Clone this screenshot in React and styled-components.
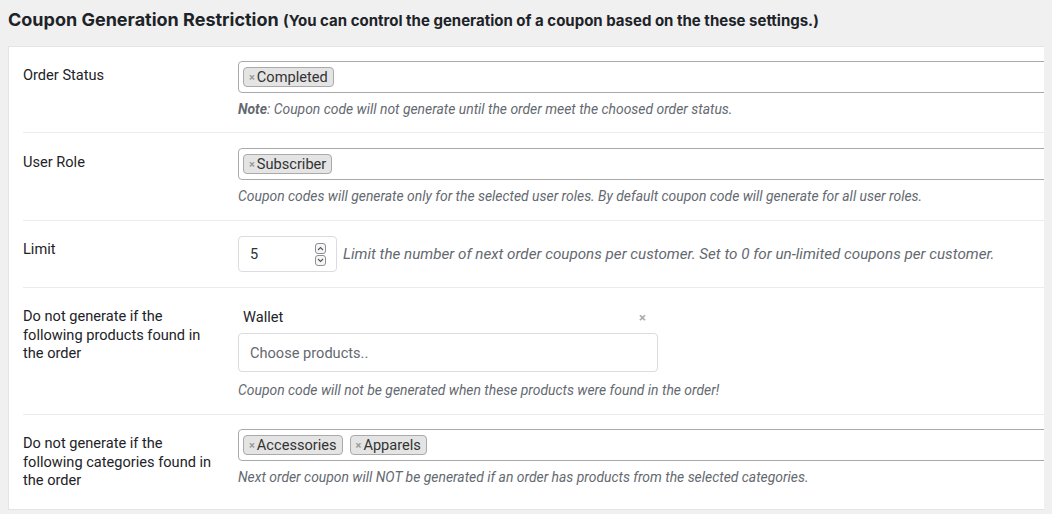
import styled, { createGlobalStyle } from "styled-components";

const GlobalStyle = createGlobalStyle`
    body {
        margin: 8px;
        background: #f0f0f1;
        font-family: Roboto, "Liberation Sans", sans-serif;
        color: #1d2327;
        overflow: hidden;
    }
`;

const Heading = styled.h2`
    margin: 0 0 15px 0;
    height: 23px;
    font-family: Inter, Roboto, sans-serif;
    font-size: 18px;
    font-weight: 700;
    line-height: 23px;
    white-space: nowrap;
    small {
        font-size: 15px;
    }
`;

const Card = styled.div`
    width: 1150px;
    background: #fff;
    border: 1px solid #e4e4e4;
    padding: 0 14px;
`;

const Row = styled.div`
    display: grid;
    grid-template-columns: 215px 1fr;
    padding: ${(p) => p.$pad || "14px 0"};
    border-bottom: 1px solid #ececec;
    &:last-child {
        border-bottom: none;
    }
`;

const Label = styled.div`
    font-size: 14.6px;
    line-height: 18.5px;
    padding-top: ${(p) => p.$top || "5px"};
    padding-right: 15px;
`;

const Field = styled.div`
    display: flex;
    flex-direction: column;
`;

const TagBox = styled.div`
    display: flex;
    align-items: center;
    gap: 7px;
    height: 32px;
    box-sizing: border-box;
    border: 1px solid #aaa;
    border-radius: 4px;
    padding: 0 4px;
    width: 900px;
`;

const Tag = styled.span`
    display: inline-flex;
    align-items: center;
    height: 20px;
    box-sizing: border-box;
    background: #e4e4e4;
    border: 1px solid #aaa;
    border-radius: 4px;
    padding: 0 5px 0 5px;
    font-size: 14.6px;
    color: #333;
    b {
        color: #999;
        font-weight: 700;
        font-size: 11px;
        margin-right: 2px;
    }
`;

const Help = styled.p`
    margin: ${(p) => p.$mt || "7px"} 0 0 0;
    font-size: ${(p) => p.$size || "13.9px"};
    font-style: italic;
    color: #646970;
    line-height: 18px;
    white-space: nowrap;
    strong {
        font-weight: 700;
    }
`;

const Inline = styled.div`
    display: flex;
    align-items: center;
    gap: 6px;
`;

const NumberBox = styled.div`
    display: flex;
    align-items: center;
    justify-content: space-between;
    width: 99px;
    height: 36px;
    box-sizing: border-box;
    border: 1px solid #dcdcde;
    border-radius: 4px;
    padding: 0 10px 0 11px;
    font-size: 14.5px;
    color: #2c3338;
`;

const Spinner = styled.div`
    display: flex;
    flex-direction: column;
    gap: 1px;
`;

const SpinBtn = styled.span`
    width: 11px;
    height: 11px;
    box-sizing: border-box;
    border: 1px solid #8c8f94;
    border-radius: 3px;
    background: #f6f6f6;
    display: flex;
    align-items: center;
    justify-content: center;
`;

const Selected = styled.div`
    display: flex;
    justify-content: space-between;
    align-items: center;
    width: 420px;
    padding: 0 12px 0 5px;
    box-sizing: border-box;
    height: 20px;
    font-size: 14.6px;
    margin-bottom: 6px;
    span {
        color: #aaa;
        font-size: 13px;
        font-weight: 700;
    }
`;

const SearchInput = styled.div`
    width: 420px;
    height: 39px;
    box-sizing: border-box;
    border: 1px solid #dcdcde;
    border-radius: 4px;
    padding: 0 11px;
    display: flex;
    align-items: center;
    font-size: 14.6px;
    color: #646970;
`;

function Chevron({ up }) {
    return (
        <svg width="7" height="5" viewBox="0 0 7 5">
            <path
                d={up ? "M1 4 L3.5 1.5 L6 4" : "M1 1 L3.5 3.5 L6 1"}
                fill="none"
                stroke="#50575e"
                strokeWidth="1.1"
            />
        </svg>
    );
}

function TagSelect({ tags }) {
    return (
        <TagBox>
            {tags.map((t) => (
                <Tag key={t}>
                    <b>×</b>
                    {t}
                </Tag>
            ))}
        </TagBox>
    );
}

export default function App() {
    return (
        <>
            <GlobalStyle />
            <Heading>
                Coupon Generation Restriction <small>(You can control the generation of a coupon based on the these settings.)</small>
            </Heading>
            <Card>
                <Row $pad="14px 0 14px">
                    <Label>Order Status</Label>
                    <Field>
                        <TagSelect tags={["Completed"]} />
                        <Help>
                            <strong>Note</strong>: Coupon code will not generate until the order meet the choosed order status.
                        </Help>
                    </Field>
                </Row>
                <Row $pad="15px 0 15px">
                    <Label>User Role</Label>
                    <Field>
                        <TagSelect tags={["Subscriber"]} />
                        <Help>
                            Coupon codes will generate only for the selected user roles. By default coupon code will generate for all user roles.
                        </Help>
                    </Field>
                </Row>
                <Row $pad="15px 0 15px">
                    <Label $top="4px">Limit</Label>
                    <Inline>
                        <NumberBox>
                            5
                            <Spinner>
                                <SpinBtn>
                                    <Chevron up />
                                </SpinBtn>
                                <SpinBtn>
                                    <Chevron />
                                </SpinBtn>
                            </Spinner>
                        </NumberBox>
                        <Help $mt="0" $size="15.2px">
                            Limit the number of next order coupons per customer. Set to 0 for un-limited coupons per customer.
                        </Help>
                    </Inline>
                </Row>
                <Row $pad="19px 0 15px">
                    <Label $top="0">Do not generate if the following products found in the order</Label>
                    <Field>
                        <Selected>
                            Wallet<span>×</span>
                        </Selected>
                        <SearchInput>Choose products..</SearchInput>
                        <Help $mt="9px">Coupon code will not be generated when these products were found in the order!</Help>
                    </Field>
                </Row>
                <Row $pad="14px 0 19px">
                    <Label>Do not generate if the following categories found in the order</Label>
                    <Field>
                        <TagSelect tags={["Accessories", "Apparels"]} />
                        <Help>Next order coupon will NOT be generated if an order has products from the selected categories.</Help>
                    </Field>
                </Row>
            </Card>
        </>
    );
}
